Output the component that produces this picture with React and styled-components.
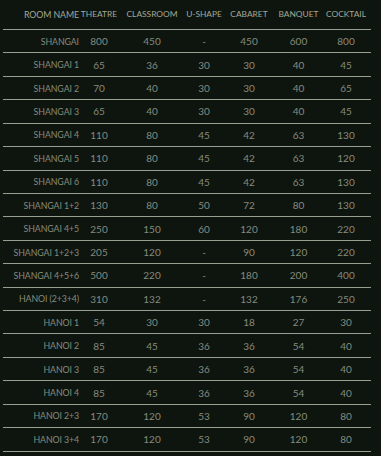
import React from "react";
import styled, { createGlobalStyle } from "styled-components";

const GlobalStyle = createGlobalStyle`
  html, body {
    margin: 0;
    padding: 0;
    background: #0e150f;
  }
  body {
    font-family: Lato, "Open Sans", sans-serif;
    -webkit-font-smoothing: antialiased;
  }
`;

const COLS = "77px 38px 68px 36px 54px 45px 50px";

const Table = styled.div`
  width: 368px;
  margin-left: 3px;
  height: 456px;
  overflow: hidden;
`;

const HeadRow = styled.div`
  display: grid;
  grid-template-columns: ${COLS};
  height: 30px;
  padding-top: 9px;
  box-sizing: border-box;
  border-bottom: 1px solid #9a9e91;
  color: #a3a896;
  font-size: 8.4px;
  letter-spacing: -0.1px;
  white-space: nowrap;
`;

const Row = styled.div`
  display: grid;
  grid-template-columns: ${COLS};
  align-items: center;
  height: 23.43px;
  box-sizing: border-box;
  border-bottom: 1px solid #9a9e91;
  color: #858b7d;
  font-size: 10px;
  white-space: nowrap;
`;

const Cell = styled.span`
  display: flex;
  justify-content: ${(p) => (p.$name ? "flex-end" : "center")};
  padding-right: ${(p) => (p.$name ? "1px" : "0")};
  font-size: ${(p) => (p.$name ? "8.8px" : "inherit")};
  letter-spacing: ${(p) => (p.$name ? "-0.1px" : "0")};
`;

const headers = ["ROOM NAME", "THEATRE", "CLASSROOM", "U-SHAPE", "CABARET", "BANQUET", "COCKTAIL"];

const rooms = [
  ["SHANGAI", 800, 450, "-", 450, 600, 800],
  ["SHANGAI 1", 65, 36, 30, 30, 40, 45],
  ["SHANGAI 2", 70, 40, 30, 30, 40, 65],
  ["SHANGAI 3", 65, 40, 30, 30, 40, 45],
  ["SHANGAI 4", 110, 80, 45, 42, 63, 130],
  ["SHANGAI 5", 110, 80, 45, 42, 63, 120],
  ["SHANGAI 6", 110, 80, 45, 42, 63, 130],
  ["SHANGAI 1+2", 130, 80, 50, 72, 80, 130],
  ["SHANGAI 4+5", 250, 150, 60, 120, 180, 220],
  ["SHANGAI 1+2+3", 205, 120, "-", 90, 120, 220],
  ["SHANGAI 4+5+6", 500, 220, "-", 180, 200, 400],
  ["HANOI (2+3+4)", 310, 132, "-", 132, 176, 250],
  ["HANOI 1", 54, 30, 30, 18, 27, 30],
  ["HANOI 2", 85, 45, 36, 36, 54, 40],
  ["HANOI 3", 85, 45, 36, 36, 54, 40],
  ["HANOI 4", 85, 45, 36, 36, 54, 40],
  ["HANOI 2+3", 170, 120, 53, 90, 120, 80],
  ["HANOI 3+4", 170, 120, 53, 90, 120, 80],
];

const App = () => {
  return (
    <>
      <GlobalStyle />
      <Table>
        <HeadRow>
          {headers.map((h, i) => (
            <Cell key={h} $name={i === 0}>
              {h}
            </Cell>
          ))}
        </HeadRow>
        {rooms.map((r) => (
          <Row key={r[0]}>
            {r.map((v, i) => (
              <Cell key={i} $name={i === 0}>
                {v}
              </Cell>
            ))}
          </Row>
        ))}
      </Table>
    </>
  );
};

export default App;
